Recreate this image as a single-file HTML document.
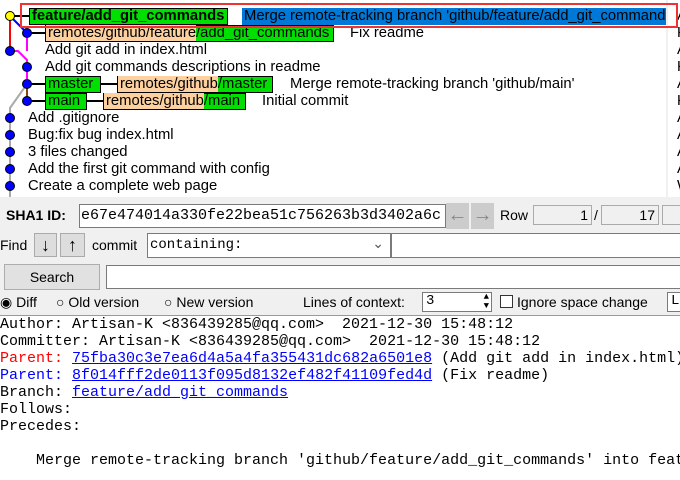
<!DOCTYPE html>
<html><head><style>
*{margin:0;padding:0;box-sizing:border-box}
body{width:680px;height:480px;overflow:hidden;background:#f0f0f0;position:relative;font-family:"Liberation Sans",sans-serif;font-size:14px;color:#000}
.a{position:absolute;white-space:nowrap}
.t{position:absolute;white-space:nowrap;line-height:17px;font-size:14.8px}
.g{background:#00e000;border:1px solid #000;padding:0 2px;line-height:15px}
.p{background:#fdd0a0}
.inp{position:absolute;background:#fff;border:1px solid #7a7a7a}
.mono{font-family:"Liberation Mono",monospace;font-size:15px}
.d{position:absolute;left:0;font-family:"Liberation Mono",monospace;font-size:15px;line-height:17px;white-space:pre}
u{text-decoration:underline;color:#00f}
</style></head><body>
<div class="a" style="left:0;top:0;width:666px;height:197px;background:#fff"></div>
<div class="a" style="left:668px;top:0;width:12px;height:197px;background:#fff"></div>
<svg class="a" style="left:0;top:0" width="60" height="197">
<line x1="10" y1="16" x2="10" y2="51" stroke="#f00" stroke-width="2"/>
<line x1="10" y1="16" x2="27" y2="33" stroke="#00f" stroke-width="2"/>
<polyline points="10,51 18,51 27,60 27,84" fill="none" stroke="#f0f" stroke-width="2"/>
<line x1="27" y1="33" x2="27" y2="51" stroke="#f0f" stroke-width="2"/>
<line x1="27" y1="84" x2="27" y2="101" stroke="#8b4513" stroke-width="2"/>
<polyline points="27,84 10,108 10,197" fill="none" stroke="#aaa" stroke-width="2"/>
<line x1="27" y1="33" x2="45" y2="33" stroke="#000" stroke-width="2"/>
<line x1="27" y1="84" x2="45" y2="84" stroke="#000" stroke-width="2"/>
<line x1="27" y1="101" x2="45" y2="101" stroke="#000" stroke-width="2"/>
<line x1="10" y1="16" x2="29" y2="16" stroke="#000" stroke-width="2"/>
<circle cx="10" cy="16" r="4.5" fill="#ff0" stroke="#000"/>
<g fill="#00f" stroke="#000"><circle cx="27" cy="33" r="4.5"/><circle cx="10" cy="51" r="4.5"/><circle cx="27" cy="67" r="4.5"/><circle cx="27" cy="84" r="4.5"/><circle cx="27" cy="101" r="4.5"/><circle cx="10" cy="118" r="4.5"/><circle cx="10" cy="135" r="4.5"/><circle cx="10" cy="152" r="4.5"/><circle cx="10" cy="169" r="4.5"/><circle cx="10" cy="186" r="4.5"/></g>
</svg>
<div class="t g" style="left:29px;top:8px;font-weight:bold;width:199px">feature/add_git_commands</div>
<div class="t" style="left:242px;top:8px;width:424px;background:#0078d7;color:#000;padding-left:2px;overflow:hidden">Merge remote-tracking branch 'github/feature/add_git_commands'</div>
<div class="t g" style="left:45px;top:25px;padding:0;width:289px"><span class="p" style="padding-left:2px">remotes/github/feature</span>/add_git_commands</div>
<div class="t" style="left:350px;top:25px">Fix readme</div>
<div class="t" style="left:45px;top:42px">Add git add in index.html</div>
<div class="t" style="left:45px;top:59px">Add git commands descriptions in readme</div>
<div class="t g" style="left:45px;top:76px;width:56px">master</div>
<svg class="a" style="left:100px;top:76px" width="18" height="17"><line x1="0" y1="8" x2="18" y2="8" stroke="#000" stroke-width="2"/></svg>
<div class="t g" style="left:117px;top:76px;padding:0;width:156px"><span class="p" style="padding-left:2px">remotes/github</span>/master</div>
<div class="t" style="left:290px;top:76px">Merge remote-tracking branch 'github/main'</div>
<div class="t g" style="left:45px;top:93px;width:42px">main</div>
<svg class="a" style="left:86px;top:93px" width="18" height="17"><line x1="0" y1="8" x2="18" y2="8" stroke="#000" stroke-width="2"/></svg>
<div class="t g" style="left:103px;top:93px;padding:0;width:143px"><span class="p" style="padding-left:2px">remotes/github</span>/main</div>
<div class="t" style="left:262px;top:93px">Initial commit</div>
<div class="t" style="left:28px;top:110px">Add .gitignore</div>
<div class="t" style="left:28px;top:127px">Bug:fix bug index.html</div>
<div class="t" style="left:28px;top:144px">3 files changed</div>
<div class="t" style="left:28px;top:161px">Add the first git command with config</div>
<div class="t" style="left:28px;top:178px">Create a complete web page</div>
<div class="t" style="left:677px;top:8px;line-height:17px">A<br>K<br>A<br>K<br>A<br>K<br>A<br>A<br>A<br>A<br>W</div>
<div class="a" style="left:20px;top:3px;width:658px;height:25px;border:2px solid #e33"></div>

<div class="a" style="left:6px;top:207px;font-weight:bold">SHA1 ID:</div>
<div class="inp mono" style="left:79px;top:204px;width:367px;height:24px;padding:2px 1px;overflow:hidden">e67e474014a330fe22bea51c756263b3d3402a6c</div>
<div class="a" style="left:446px;top:203px;width:23px;height:26px;background:#ccc;color:#888;text-align:center;font-size:20px;line-height:24px">&#8592;</div>
<div class="a" style="left:471px;top:203px;width:23px;height:26px;background:#ccc;color:#888;text-align:center;font-size:20px;line-height:24px">&#8594;</div>
<div class="a" style="left:500px;top:207px">Row</div>
<div class="a" style="left:533px;top:205px;width:59px;height:20px;border:1px solid #aaa;text-align:right;padding-right:3px;line-height:18px">1</div>
<div class="a" style="left:594px;top:207px">/</div>
<div class="a" style="left:601px;top:205px;width:58px;height:20px;border:1px solid #aaa;text-align:right;padding-right:3px;line-height:18px">17</div>
<div class="a" style="left:662px;top:205px;width:20px;height:20px;border:1px solid #aaa"></div>

<div class="a" style="left:0;top:237px">Find</div>
<div class="a" style="left:34px;top:233px;width:23px;height:24px;background:#ddd;border:1px solid #aaa;text-align:center;font-size:18px;line-height:22px;font-weight:bold">&#8595;</div>
<div class="a" style="left:60px;top:233px;width:25px;height:24px;background:#ddd;border:1px solid #aaa;text-align:center;font-size:18px;line-height:22px;font-weight:bold">&#8593;</div>
<div class="a" style="left:92px;top:237px">commit</div>
<div class="inp mono" style="left:147px;top:233px;width:244px;height:25px;padding:3px 2px;font-size:14px">containing:<span style="position:absolute;right:6px;top:2px;color:#555">&#8964;</span></div>
<div class="inp" style="left:391px;top:233px;width:292px;height:25px"></div>

<div class="a" style="left:4px;top:264px;width:96px;height:26px;background:#e1e1e1;border:1px solid #adadad;text-align:center;line-height:24px">Search</div>
<div class="inp" style="left:106px;top:265px;width:580px;height:24px"></div>

<div class="a" style="left:0;top:294px">&#9673; Diff</div>
<div class="a" style="left:56px;top:294px">&#9675; Old version</div>
<div class="a" style="left:164px;top:294px">&#9675; New version</div>
<div class="a" style="left:303px;top:294px">Lines of context:</div>
<div class="inp mono" style="left:422px;top:292px;width:70px;height:20px;padding:0 3px;font-size:14px">3<span style="position:absolute;right:2px;top:0;font-size:9px;line-height:9px">&#9650;<br>&#9660;</span></div>
<div class="a" style="left:500px;top:295px;width:13px;height:13px;border:1px solid #333;background:#fff"></div>
<div class="a" style="left:517px;top:294px">Ignore space change</div>
<div class="inp mono" style="left:667px;top:292px;width:20px;height:20px;padding:0 3px;font-size:14px">L</div>

<div class="a" style="left:0;top:315px;width:680px;height:165px;background:#fff;border-top:1px solid #999"></div>
<div class="d" style="top:316px">Author: Artisan-K &lt;836439285@qq.com&gt;  2021-12-30 15:48:12</div>
<div class="d" style="top:333px">Committer: Artisan-K &lt;836439285@qq.com&gt;  2021-12-30 15:48:12</div>
<div class="d" style="top:350px"><span style="color:#f00">Parent:</span> <u>75fba30c3e7ea6d4a5a4fa355431dc682a6501e8</u> (Add git add in index.html)</div>
<div class="d" style="top:367px"><span style="color:#00f">Parent:</span> <u>8f014fff2de0113f095d8132ef482f41109fed4d</u> (Fix readme)</div>
<div class="d" style="top:384px">Branch: <u>feature/add_git_commands</u></div>
<div class="d" style="top:401px">Follows:</div>
<div class="d" style="top:418px">Precedes:</div>
<div class="d" style="top:452px">    Merge remote-tracking branch 'github/feature/add_git_commands' into feature</div>
</body></html>
